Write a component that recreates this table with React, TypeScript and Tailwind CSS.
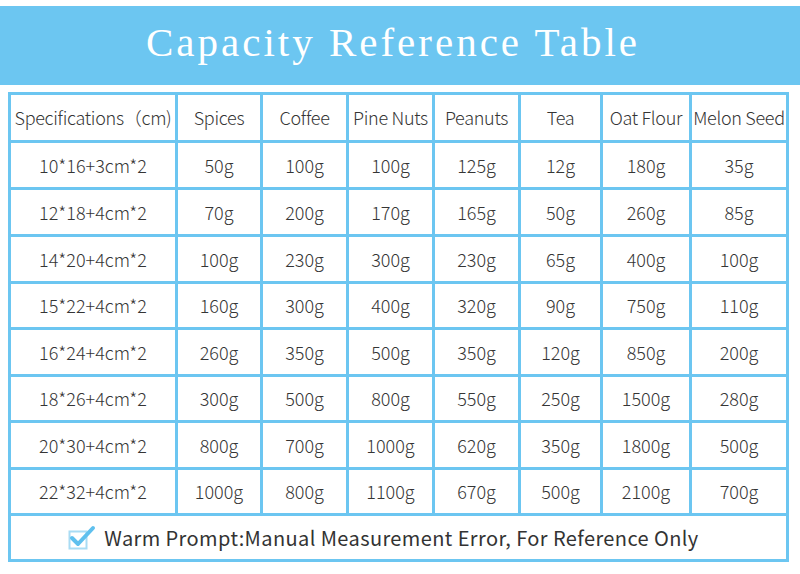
import React from "react";

const headers = ["Specifications（cm)", "Spices", "Coffee", "Pine Nuts", "Peanuts", "Tea", "Oat Flour", "Melon Seed"];

const rows: string[][] = [
    ["10*16+3cm*2", "50g", "100g", "100g", "125g", "12g", "180g", "35g"],
    ["12*18+4cm*2", "70g", "200g", "170g", "165g", "50g", "260g", "85g"],
    ["14*20+4cm*2", "100g", "230g", "300g", "230g", "65g", "400g", "100g"],
    ["15*22+4cm*2", "160g", "300g", "400g", "320g", "90g", "750g", "110g"],
    ["16*24+4cm*2", "260g", "350g", "500g", "350g", "120g", "850g", "200g"],
    ["18*26+4cm*2", "300g", "500g", "800g", "550g", "250g", "1500g", "280g"],
    ["20*30+4cm*2", "800g", "700g", "1000g", "620g", "350g", "1800g", "500g"],
    ["22*32+4cm*2", "1000g", "800g", "1100g", "670g", "500g", "2100g", "700g"],
];

function CheckIcon() {
    return (
        <svg width="28" height="26" viewBox="0 0 28 26" className="shrink-0">
            <rect x="1.5" y="6.5" width="17" height="17" fill="none" stroke="#a9dcf4" strokeWidth="2" />
            <path d="M4 13 L10 19 L25 3" fill="none" stroke="#5fc0ee" strokeWidth="4" strokeLinecap="round" strokeLinejoin="round" />
        </svg>
    );
}

export default function App() {
    return (
        <div className="w-[800px] h-[574px] bg-white overflow-hidden text-[#353535]" style={{ fontFamily: '"Noto Sans CJK SC", "Noto Sans", sans-serif' }}>
            <div className="h-[6px]" />
            {/* title band */}
            <div className="h-[79px] bg-[#6cc6f1] flex items-center justify-center">
                <h1 className="text-white text-[41px] tracking-[3px] pb-[6px] pr-[14px]" style={{ fontFamily: '"Liberation Serif", serif' }}>
                    Capacity Reference Table
                </h1>
            </div>

            <div className="pt-[7px] pl-[8px]">
                <div className="w-[781px] bg-[#6cc6f1] p-[3px] grid gap-[3px] grid-cols-[164px_82px_83px_83px_83px_79px_86px_94px] grid-rows-[45px_44px_44px_44px_43px_44px_43px_44px_43px_43px] font-light">
                    {headers.map((h) => (
                        <div key={h} className="bg-white flex items-center justify-center text-[18px] whitespace-nowrap tracking-[-0.3px]">
                            {h}
                        </div>
                    ))}
                    {rows.map((r) =>
                        r.map((c, i) => (
                            <div key={r[0] + i} className="bg-white flex items-center justify-center text-[18px] whitespace-nowrap">
                                {c}
                            </div>
                        ))
                    )}
                    <div className="col-span-8 bg-white flex items-center justify-center gap-[8px] pr-[30px]">
                        <CheckIcon />
                        <span className="text-[20px] tracking-[0.4px] font-normal text-[#333]">
                            Warm Prompt:Manual Measurement Error, For Reference Only
                        </span>
                    </div>
                </div>
            </div>
        </div>
    );
}
